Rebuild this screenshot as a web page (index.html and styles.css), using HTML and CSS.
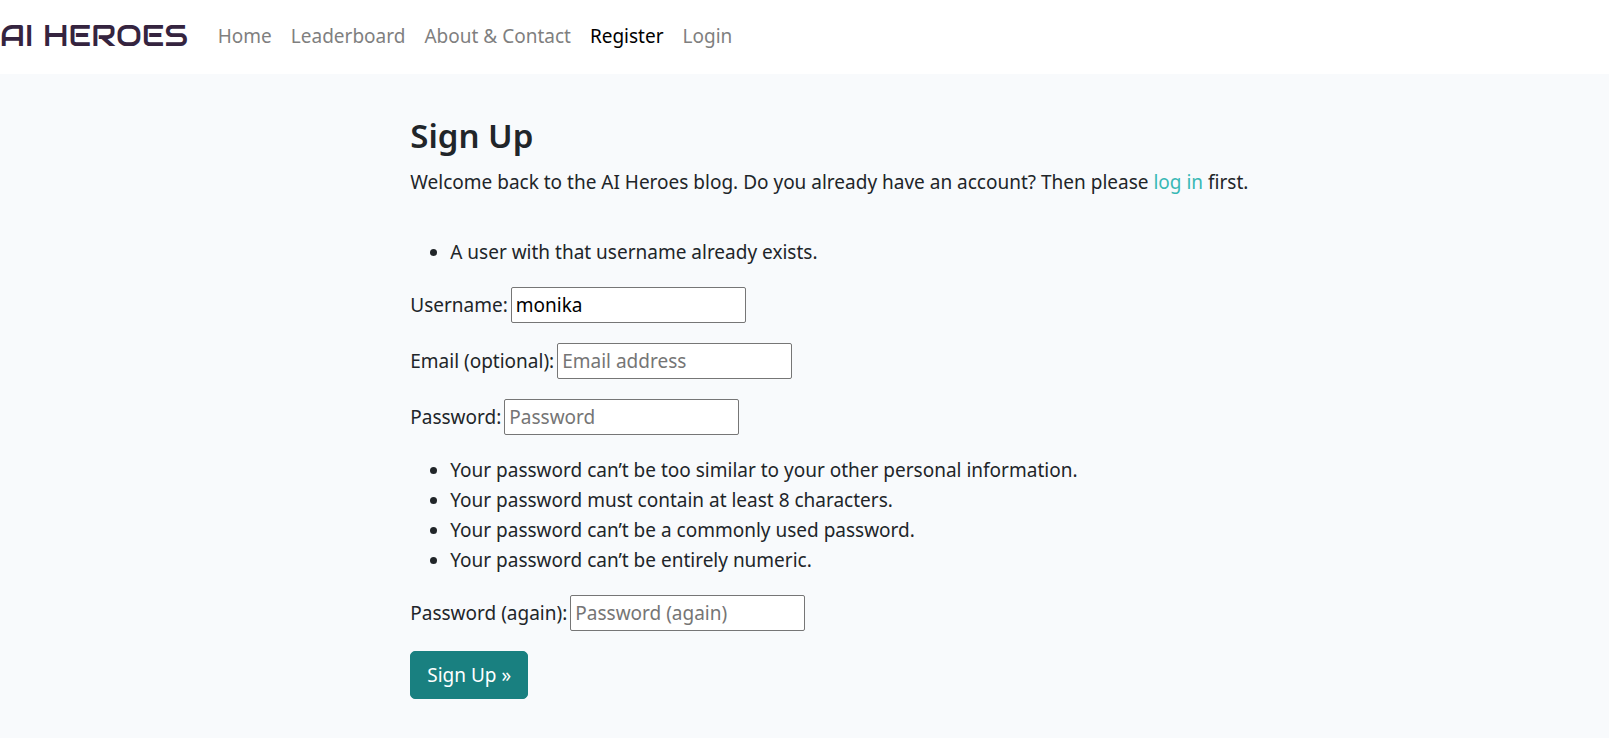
FILE: index.html
```html
<!DOCTYPE html>
<html lang="en">
<head>
<meta charset="utf-8">
<title>Sign Up - AI Heroes</title>
<link rel="stylesheet" href="styles.css">
</head>
<body>
<header class="navbar">
  <a class="brand" href="#">AI HEROES</a>
  <nav class="nav">
    <a class="nav-link" href="#">Home</a>
    <a class="nav-link" href="#">Leaderboard</a>
    <a class="nav-link" href="#">About &amp; Contact</a>
    <a class="nav-link active" href="#" aria-current="page">Register</a>
    <a class="nav-link" href="#">Login</a>
  </nav>
</header>
<main class="content">
  <h1 class="title">Sign Up</h1>
  <p class="intro">Welcome back to the AI Heroes blog. Do you already have an account? Then please <a class="link" href="#">log in</a> first.</p>
  <form class="form">
    <ul class="list">
      <li>A user with that username already exists.</li>
    </ul>
    <div class="field">
      <label for="username">Username:</label>
      <input class="input" id="username" type="text" value="monika">
    </div>
    <div class="field">
      <label for="email">Email (optional):</label>
      <input class="input" id="email" type="email" placeholder="Email address">
    </div>
    <div class="field">
      <label for="password">Password:</label>
      <input class="input" id="password" type="password" placeholder="Password">
    </div>
    <ul class="list">
      <li>Your password can’t be too similar to your other personal information.</li>
      <li>Your password must contain at least 8 characters.</li>
      <li>Your password can’t be a commonly used password.</li>
      <li>Your password can’t be entirely numeric.</li>
    </ul>
    <div class="field">
      <label for="password2">Password (again):</label>
      <input class="input" id="password2" type="password" placeholder="Password (again)">
    </div>
    <button class="button" type="submit">Sign Up »</button>
  </form>
</main>
</body>
</html>
```
FILE: styles.css
```css
* {
  box-sizing: border-box;
}

body {
  margin: 0;
  background: #f8fafc;
  color: #212529;
  font-family: "Segoe UI", "Noto Sans", sans-serif;
  font-size: 19px;
  line-height: 30px;
}

.navbar {
  display: flex;
  align-items: center;
  gap: 30px;
  padding: 20px 0 22px;
  background: #fff;
}

.brand {
  color: #35243f;
  font-family: Audiowide, "DejaVu Sans", sans-serif;
  font-size: 30px;
  font-weight: 400;
  line-height: 32px;
  text-decoration: none;
}

.nav {
  display: flex;
  gap: 19px;
}

.nav-link {
  color: #7f7f7f;
  text-decoration: none;
}

.nav-link.active {
  color: #000;
}

.content {
  padding: 41px 20px 40px calc(25% + 8px);
}

.title {
  margin: 0 0 10px;
  font-size: 33px;
  font-weight: 600;
  line-height: 42px;
}

.intro {
  margin: 0 0 40px;
}

.link {
  color: #38b8b5;
  text-decoration: none;
}

.form {
  display: flex;
  flex-direction: column;
  align-items: flex-start;
  gap: 20px;
}

.list {
  margin: 0;
  padding-left: 40px;
}

.field {
  display: flex;
  align-items: center;
  gap: 3px;
}

.input {
  width: 235px;
  height: 36px;
  padding: 2px 4px;
  border: 1px solid #767676;
  border-radius: 2px;
  background: #fff;
  color: #000;
  font: inherit;
}

.input::placeholder {
  color: #757575;
}

.button {
  padding: 8px 16px;
  border: 1px solid #198080;
  border-radius: 5px;
  background: #198080;
  color: #fff;
  font: inherit;
}
```
